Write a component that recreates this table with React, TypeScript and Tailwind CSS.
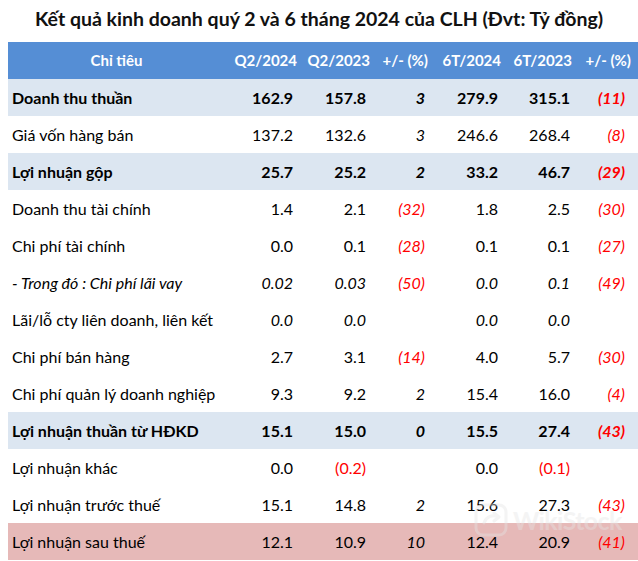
type Row = {
  label: string;
  vals: string[];
  kind?: 'blue' | 'pink';
  bold?: boolean;
  italicLabel?: boolean;
  italicVals?: boolean;
};

const rows: Row[] = [
  { label: 'Doanh thu thuần', vals: ['162.9', '157.8', '3', '279.9', '315.1', '(11)'], kind: 'blue', bold: true },
  { label: 'Giá vốn hàng bán', vals: ['137.2', '132.6', '3', '246.6', '268.4', '(8)'] },
  { label: 'Lợi nhuận gộp', vals: ['25.7', '25.2', '2', '33.2', '46.7', '(29)'], kind: 'blue', bold: true },
  { label: 'Doanh thu tài chính', vals: ['1.4', '2.1', '(32)', '1.8', '2.5', '(30)'] },
  { label: 'Chi phí tài chính', vals: ['0.0', '0.1', '(28)', '0.1', '0.1', '(27)'] },
  { label: '- Trong đó : Chi phí lãi vay', vals: ['0.02', '0.03', '(50)', '0.0', '0.1', '(49)'], italicLabel: true, italicVals: true },
  { label: 'Lãi/lỗ cty liên doanh, liên kết', vals: ['0.0', '0.0', '', '0.0', '0.0', ''], italicVals: true },
  { label: 'Chi phí bán hàng', vals: ['2.7', '3.1', '(14)', '4.0', '5.7', '(30)'] },
  { label: 'Chi phí quản lý doanh nghiệp', vals: ['9.3', '9.2', '2', '15.4', '16.0', '(4)'] },
  { label: 'Lợi nhuận thuần từ HĐKD', vals: ['15.1', '15.0', '0', '15.5', '27.4', '(43)'], kind: 'blue', bold: true },
  { label: 'Lợi nhuận khác', vals: ['0.0', '(0.2)', '', '0.0', '(0.1)', ''] },
  { label: 'Lợi nhuận trước thuế', vals: ['15.1', '14.8', '2', '15.6', '27.3', '(43)'] },
  { label: 'Lợi nhuận sau thuế', vals: ['12.1', '10.9', '10', '12.4', '20.9', '(41)'], kind: 'pink' },
];

const heads = ['Q2/2024', 'Q2/2023', '+/- (%)', '6T/2024', '6T/2023', '+/- (%)'];
const headPad = ['pr-0', 'pr-0', 'pr-[2px]', 'pr-[1px]', 'pr-[2px]', 'pr-[7px]'];
const valPad = ['pr-[4px]', 'pr-[4px]', 'pr-[5px]', 'pr-[4px]', 'pr-[4px]', 'pr-[13px]'];

const grid = 'grid grid-cols-[217px_72px_73px_60px_72px_72px_64px]';

export default function App() {
  return (
    <div className="relative w-[638px] h-[561px] bg-white text-black font-['Lato','Open_Sans',sans-serif] overflow-hidden">
      <h1 className="h-[42px] flex items-center justify-center text-[19.5px] font-bold text-[#111] pb-[4px] whitespace-nowrap">
        Kết quả kinh doanh quý 2 và 6 tháng 2024 của CLH (Đvt: Tỷ đồng)
      </h1>

      <div className="ml-[8px] w-[630px] text-[16px]">
        <div className={`${grid} h-[37px] bg-[#558ed5] text-white font-bold items-center text-[15px]`}>
          <div className="text-center">Chỉ tiêu</div>
          {heads.map((h, i) => (
            <div key={i} className={`text-right whitespace-nowrap ${headPad[i]}`}>
              {h}
            </div>
          ))}
        </div>

        {rows.map((r, ri) => {
          const bg = r.kind === 'blue' ? 'bg-[#dce6f1]' : r.kind === 'pink' ? 'bg-[#e6b9b8]' : 'bg-white';
          return (
            <div key={ri} className={`${grid} h-[37px] items-center pt-[1px] ${bg} ${r.bold ? 'font-bold' : ''}`}>
              <div className={`pl-[4px] whitespace-nowrap ${r.italicLabel ? 'italic' : ''}`}>{r.label}</div>
              {r.vals.map((v, i) => {
                const pct = i === 2 || i === 5;
                const red = v.startsWith('(');
                const italic = pct || r.italicVals;
                return (
                  <div
                    key={i}
                    className={`text-right whitespace-nowrap ${valPad[i]} ${italic ? 'italic' : ''} ${red ? 'text-[#ff0000]' : ''}`}
                  >
                    {v}
                  </div>
                );
              })}
            </div>
          );
        })}
      </div>

      <div className="absolute left-[474px] top-[503px] flex items-center gap-[5px] pointer-events-none opacity-40">
        <svg width="34" height="34" viewBox="0 0 34 34" fill="none">
          <rect x="2" y="2" width="30" height="30" rx="7" stroke="#e4e4e4" strokeWidth="3" />
          <path d="M10 20c2-6 8-9 14-6" stroke="#e4e4e4" strokeWidth="3" strokeLinecap="round" />
          <path d="M20 10l5 4-5 4" stroke="#e4e4e4" strokeWidth="3" strokeLinecap="round" strokeLinejoin="round" />
        </svg>
        <span className="text-[25px] leading-none font-bold text-[#e4e4e4] tracking-tight">WikiStock</span>
      </div>
    </div>
  );
}
